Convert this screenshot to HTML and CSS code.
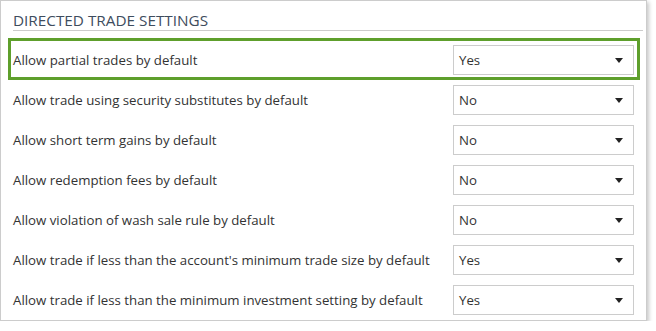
FILE: index.html
```html
<!DOCTYPE html>
<html lang="en">
<head>
    <meta charset="UTF-8">
    <title>Directed Trade Settings</title>
    <link rel="stylesheet" href="styles.css">
</head>
<body>

    <div class="panel">
        <h2 class="panel-title">DIRECTED TRADE SETTINGS</h2>

        <div class="settings">
            <!-- highlighted row -->
            <div class="setting highlight">
                <label>Allow partial trades by default</label>
                <div class="dropdown"><span>Yes</span><i class="caret"></i></div>
            </div>

            <div class="setting">
                <label>Allow trade using security substitutes by default</label>
                <div class="dropdown"><span>No</span><i class="caret"></i></div>
            </div>

            <div class="setting">
                <label>Allow short term gains by default</label>
                <div class="dropdown"><span>No</span><i class="caret"></i></div>
            </div>

            <div class="setting">
                <label>Allow redemption fees by default</label>
                <div class="dropdown"><span>No</span><i class="caret"></i></div>
            </div>

            <div class="setting">
                <label>Allow violation of wash sale rule by default</label>
                <div class="dropdown"><span>No</span><i class="caret"></i></div>
            </div>

            <div class="setting">
                <label>Allow trade if less than the account's minimum trade size by default</label>
                <div class="dropdown"><span>Yes</span><i class="caret"></i></div>
            </div>

            <div class="setting">
                <label>Allow trade if less than the minimum investment setting by default</label>
                <div class="dropdown"><span>Yes</span><i class="caret"></i></div>
            </div>
        </div>
    </div>

</body>
</html>
```

FILE: styles.css
```css
/* Page */
body {
    margin: 0;
    background: #fff;
    font-family: "Open Sans", "Noto Sans", sans-serif;
    color: #333;
}

/* Settings panel */
.panel {
    width: 645px;
    height: 319px;
    border: 1px solid #ccc;
    box-shadow: 2px 2px 4px rgba(0, 0, 0, 0.22);
}

.panel-title {
    margin: 0 3px 0 12px;
    padding-top: 9px;
    height: 20px;
    line-height: 20px;
    font-size: 15.3px;
    font-weight: normal;
    color: #3e4c5d;
    border-bottom: 1px solid #ccc;
}

/* Rows */
.settings {
    margin: 9px 6px 0 7px;
}

.setting {
    position: relative;
    display: flex;
    align-items: center;
    height: 40px;
    padding: 0 6px 0 5px;
}

.setting label {
    flex: 1;
    font-size: 13.25px;
}

.highlight::after {
    content: "";
    position: absolute;
    top: -2px;
    left: 0;
    right: 0;
    bottom: 0;
    border: 3px solid #5e9f2c;
}

/* Fake select box */
.dropdown {
    box-sizing: border-box;
    display: flex;
    align-items: center;
    width: 181px;
    height: 30px;
    padding: 0 10px 0 5px;
    border: 1px solid #ccc;
    background: #fff;
    font-size: 13.25px;
}

.dropdown span {
    flex: 1;
}

.caret {
    width: 0;
    height: 0;
    border-left: 4px solid transparent;
    border-right: 4px solid transparent;
    border-top: 5px solid #222;
}
```
